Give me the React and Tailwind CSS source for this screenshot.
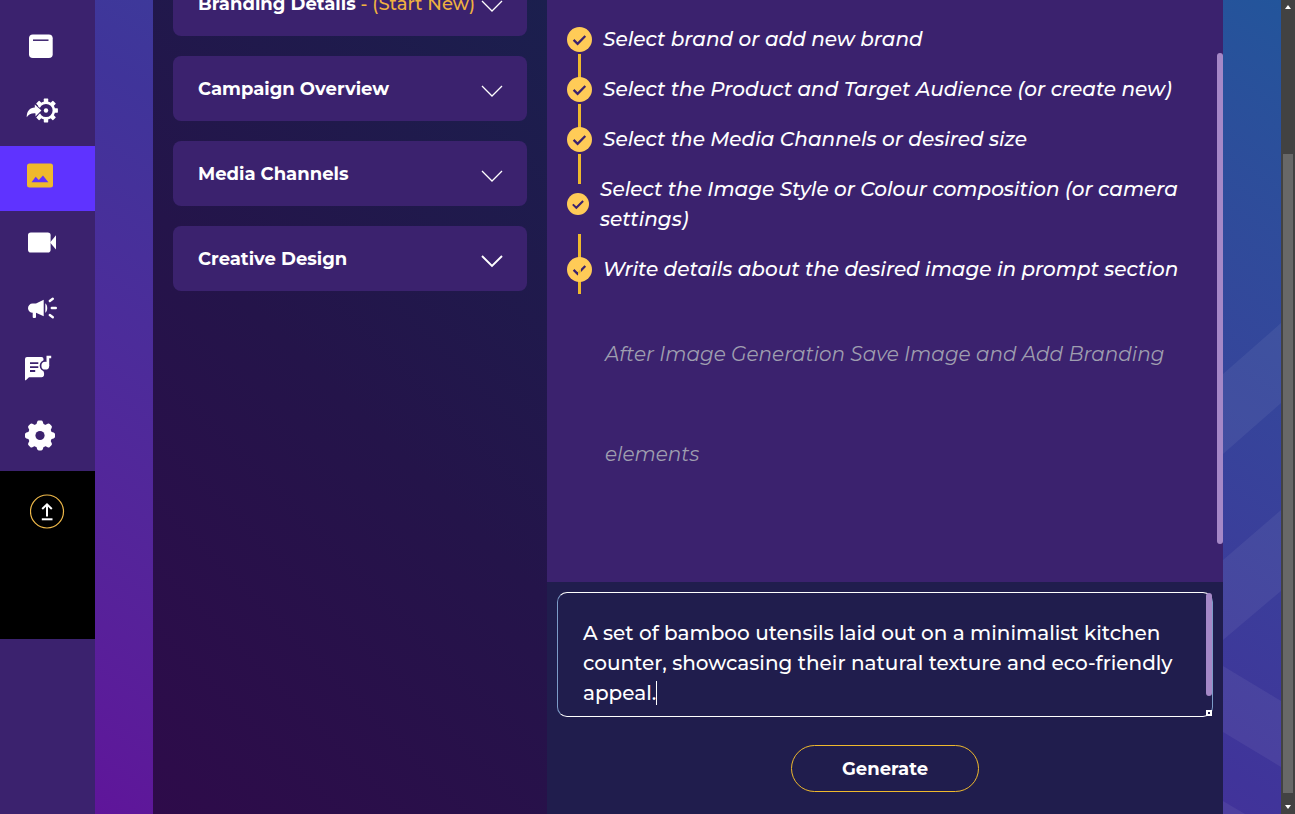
import React from "react";

const TEETH = [0, 45, 90, 135, 180, 225, 270, 315];

function NavSvg({ children }) {
  return (
    <svg viewBox="0 0 40 40" className="size-10" aria-hidden="true">
      {children}
    </svg>
  );
}

const ArchiveIcon = () => (
  <NavSvg>
    <rect x="7" y="6.5" width="23.7" height="23.5" rx="3.8" fill="#fff" />
    <path d="M11 12.2h15.5" stroke="#3b226e" strokeWidth="1.5" />
  </NavSvg>
);

const IntegrationIcon = () => (
  <NavSvg>
    <g transform="translate(24 17.5)" fill="#fff">
      {TEETH.map((a) => (
        <rect key={a} x="-2.2" y="-11.9" width="4.4" height="4.5" rx="0.6" transform={`rotate(${a})`} />
      ))}
      <circle r="7.9" fill="none" stroke="#fff" strokeWidth="2.6" />
      <circle r="2.2" />
    </g>
    <path
      d="M4.7 24.2c0-6 3-9.4 8.1-9.600v-3l6.600 5.900-5.900 6v-3.100c-4.300-.3-6.700 1-8.800 3.800z"
      fill="#fff"
      stroke="#3b226e"
      strokeWidth="1.8"
      paintOrder="stroke"
      strokeLinejoin="round"
    />
  </NavSvg>
);

const ImageIcon = () => (
  <NavSvg>
    <rect x="5" y="5.5" width="26" height="24" rx="2.5" fill="#efb92d" />
    <path d="M9.5 24.3 13.7 18.8l3.1 3.3L21 17.5l5.4 6.800z" fill="#5f33ff" />
  </NavSvg>
);

const VideoIcon = () => (
  <NavSvg>
    <rect x="6" y="9.5" width="22.6" height="20" rx="2.8" fill="#fff" />
    <path d="M28 19.5 34 12.3v14.3z" fill="#fff" />
  </NavSvg>
);

const MegaphoneIcon = () => (
  <NavSvg>
    <path
      d="M10.5 15.5h3.5L21.7 11.7v16.600L14 24.700v4.300a1 1 0 0 1-1 1h-1.300a1 1 0 0 1-1-1v-4.300a4.600 4.600 0 0 1-.2-9.200z"
      fill="#fff"
    />
    <path d="M23.300 15.200c2.600 2 2.600 7.600 0 9.600z" fill="#fff" />
    <path d="M27.800 13l3-2.300M29.800 20h4M27.800 27l3 2.300" stroke="#fff" strokeWidth="2.4" strokeLinecap="round" />
  </NavSvg>
);

const LyricsIcon = () => (
  <NavSvg>
    <path
      d="M5 4h14.500a2 2 0 0 1 2 2v12l.3 4a2.200 2.200 0 0 1-2.200 2.200H7L3.800 27.300H3V6a2 2 0 0 1 2-2z"
      fill="#fff"
    />
    <circle cx="23.3" cy="12.7" r="5.6" fill="#3b226e" />
    <path d="M8 10.100h8.300M8 14.100h8.300M8 18h5.200" stroke="#3b226e" strokeWidth="1.8" />
    <circle cx="19.3" cy="21" r="2.8" fill="#fff" />
    <circle cx="23.3" cy="12.7" r="3.9" fill="#fff" />
    <path d="M24.500 12.700V2.800h4.700v2.500h-2v7.400z" fill="#fff" />
  </NavSvg>
);

const GearIcon = () => (
  <NavSvg>
    <g transform="translate(18 17.5)" fill="#fff">
      {TEETH.map((a) => (
        <path
          key={a}
          d="M-4-10-2.900-13.600Q-2.500-15-1.200-15H1.200Q2.500-15 2.900-13.600L4-10z"
          transform={`rotate(${a})`}
        />
      ))}
      <circle r="12" />
      <circle r="4.6" fill="#3b226e" />
    </g>
  </NavSvg>
);

const NAV = [
  { label: "Archive", Icon: ArchiveIcon },
  { label: "Integrations", Icon: IntegrationIcon },
  { label: "Images", Icon: ImageIcon, active: true },
  { label: "Videos", Icon: VideoIcon },
  { label: "Campaigns", Icon: MegaphoneIcon },
  { label: "Lyrics", Icon: LyricsIcon },
  { label: "Settings", Icon: GearIcon },
];

function Sidebar() {
  return (
    <aside className="w-[95px] shrink-0 bg-[#3b226e] pt-4">
      <nav className="flex flex-col">
        {NAV.map(({ label, Icon, active }) => (
          <a
            key={label}
            href="#"
            aria-label={label}
            className={`flex h-[65px] items-start pt-3 pl-[22px] ${active ? "bg-[#5f33ff]" : ""}`}
          >
            <Icon />
          </a>
        ))}
      </nav>
      <div className="flex h-[168px] justify-center bg-black pt-[23px]">
        <button type="button" aria-label="Upload" className="size-[35px]">
          <svg viewBox="0 0 35 35" className="size-[35px]" fill="none">
            <circle cx="17" cy="17.5" r="16.5" stroke="#efb94a" strokeWidth="1.2" />
            <path d="M17 22.500V11.500M12.200 15 17 10.300l4.800 4.700" stroke="#fff" strokeWidth="2" />
            <path d="M11.800 25.300h10.700" stroke="#fff" strokeWidth="2" />
          </svg>
        </button>
      </div>
    </aside>
  );
}

function Panel({ title, note, bold }) {
  return (
    <button
      type="button"
      className="flex h-[65px] w-full shrink-0 items-center justify-between rounded-lg bg-[#3b226e] pr-6 pl-[25px] text-left text-lg font-bold text-white"
    >
      <span className="whitespace-nowrap">
        {title}
        {note && <span className="font-medium text-[#efb13f]"> - {note}</span>}
      </span>
      <svg viewBox="0 0 22 22" className="size-[22px] shrink-0" fill="none" aria-hidden="true">
        <path d="M1 8 11 18l10-10" stroke="#fff" strokeWidth={bold ? 1.9 : 1.3} />
      </svg>
    </button>
  );
}

function Check({ small }) {
  return (
    <svg viewBox="0 0 25 25" className={`relative shrink-0 ${small ? "size-[22px]" : "size-[25px]"}`} aria-hidden="true">
      <mask id="check-hole">
        <rect width="25" height="25" fill="#fff" />
        <path d="M6.600 12.900l4 3.900 7.700-7.800" fill="none" stroke="#000" strokeWidth="2.3" />
      </mask>
      <circle cx="12.5" cy="12.5" r="12.5" fill="#ffcb57" mask="url(#check-hole)" />
    </svg>
  );
}

const STEPS = [
  { text: "Select brand or add new brand" },
  { text: "Select the Product and Target Audience (or create new)" },
  { text: "Select the Media Channels or desired size" },
  { text: "Select the Image Style or Colour composition (or camera settings)", small: true },
  { text: "Write details about the desired image in prompt section", last: true },
];

function Steps() {
  return (
    <section className="relative flex-1 bg-[#3b226e] pt-6 pr-10 pl-5">
      <ol className="flex flex-col gap-5 text-xl leading-[30px] font-medium text-white italic">
        {STEPS.map(({ text, small, last }) => (
          <li key={text} className="relative flex items-center gap-[11px]">
            <span
              className={`absolute left-[11px] h-[30px] w-[3px] bg-[#efb92d] ${last ? "top-2.5" : "top-full"}`}
            />
            <Check small={small} />
            <span>{text}</span>
          </li>
        ))}
      </ol>
      <p className="mt-5 ml-[38px] text-xl leading-[100px] text-[#9f9eb0] italic">
        After Image Generation Save Image and Add Branding elements
      </p>
      <div className="absolute top-[53px] right-0 h-[491px] w-1.5 rounded-full bg-[#a588c7]" />
    </section>
  );
}

function Prompt() {
  return (
    <form className="flex flex-col items-center bg-[#201d4d] px-2.5 pt-2.5 pb-[22px]" onSubmit={(e) => e.preventDefault()}>
      <div className="relative w-full">
        <textarea
          aria-label="Prompt"
          defaultValue="A set of bamboo utensils laid out on a minimalist kitchen counter, showcasing their natural texture and eco-friendly appeal."
          className="block h-[125px] w-full resize-none overflow-hidden rounded-[10px] border border-x-[#7c9cc8] border-y-white bg-transparent py-[25px] pr-8 pl-[25px] text-xl leading-[30px] font-medium text-white outline-none"
        />
        <span className="absolute top-[89px] left-[99px] h-6 w-px bg-white" />
        <span className="absolute top-px right-px h-[103px] w-1.5 rounded-full bg-[#a588c7]" />
        <span className="absolute right-px bottom-px flex size-1.5 items-center justify-center bg-white">
          <span className="size-0.5 bg-[#201d4d]" />
        </span>
      </div>
      <button
        type="submit"
        className="mt-7 h-[47px] w-[188px] rounded-full border border-[#efb92d] text-lg font-bold text-white"
      >
        Generate
      </button>
    </form>
  );
}

function PageScrollbar() {
  return (
    <div className="flex w-3.5 shrink-0 flex-col items-center justify-between bg-[#424242] py-[5px]" aria-hidden="true">
      <svg viewBox="0 0 6 4" className="h-1 w-1.5">
        <path d="M0 4 3 0l3 4z" fill="#fff" />
      </svg>
      <div className="mt-[145px] mb-3 w-2.5 flex-1 bg-[#686868]" />
      <svg viewBox="0 0 6 4" className="h-1 w-1.5">
        <path d="M0 0l3 4 3-4z" fill="#fff" />
      </svg>
    </div>
  );
}

export default function App() {
  return (
    <div className="flex min-h-screen bg-linear-to-tr from-[#61109a] via-[#40349a] to-[#22559b] font-[Montserrat,Inter,sans-serif]">
      <Sidebar />
      <div className="ml-[58px] flex min-w-0 flex-1">
        <div className="flex w-[394px] shrink-0 flex-col gap-5 bg-linear-[45deg] from-[#2e0b4a] via-[#24144a] to-[#1b1f4e] px-5">
          <div className="flex h-9 items-end overflow-hidden">
            <Panel title="Branding Details" note="(Start New)" />
          </div>
          <Panel title="Campaign Overview" />
          <Panel title="Media Channels" />
          <Panel title="Creative Design" bold />
        </div>
        <main className="flex min-w-0 flex-1 flex-col">
          <Steps />
          <Prompt />
        </main>
      </div>
      <svg viewBox="0 0 58 814" preserveAspectRatio="none" className="w-[58px] shrink-0 self-stretch" aria-hidden="true">
        <g fill="#fff" fillOpacity="0.06">
          <path d="M0 374 58 323v80L0 454z" />
          <path d="M0 560 58 510v81L0 640z" />
          <path d="M0 666l58 35v66L0 732z" />
          <path d="M0 801l22 13H0z" />
        </g>
      </svg>
      <PageScrollbar />
    </div>
  );
}
